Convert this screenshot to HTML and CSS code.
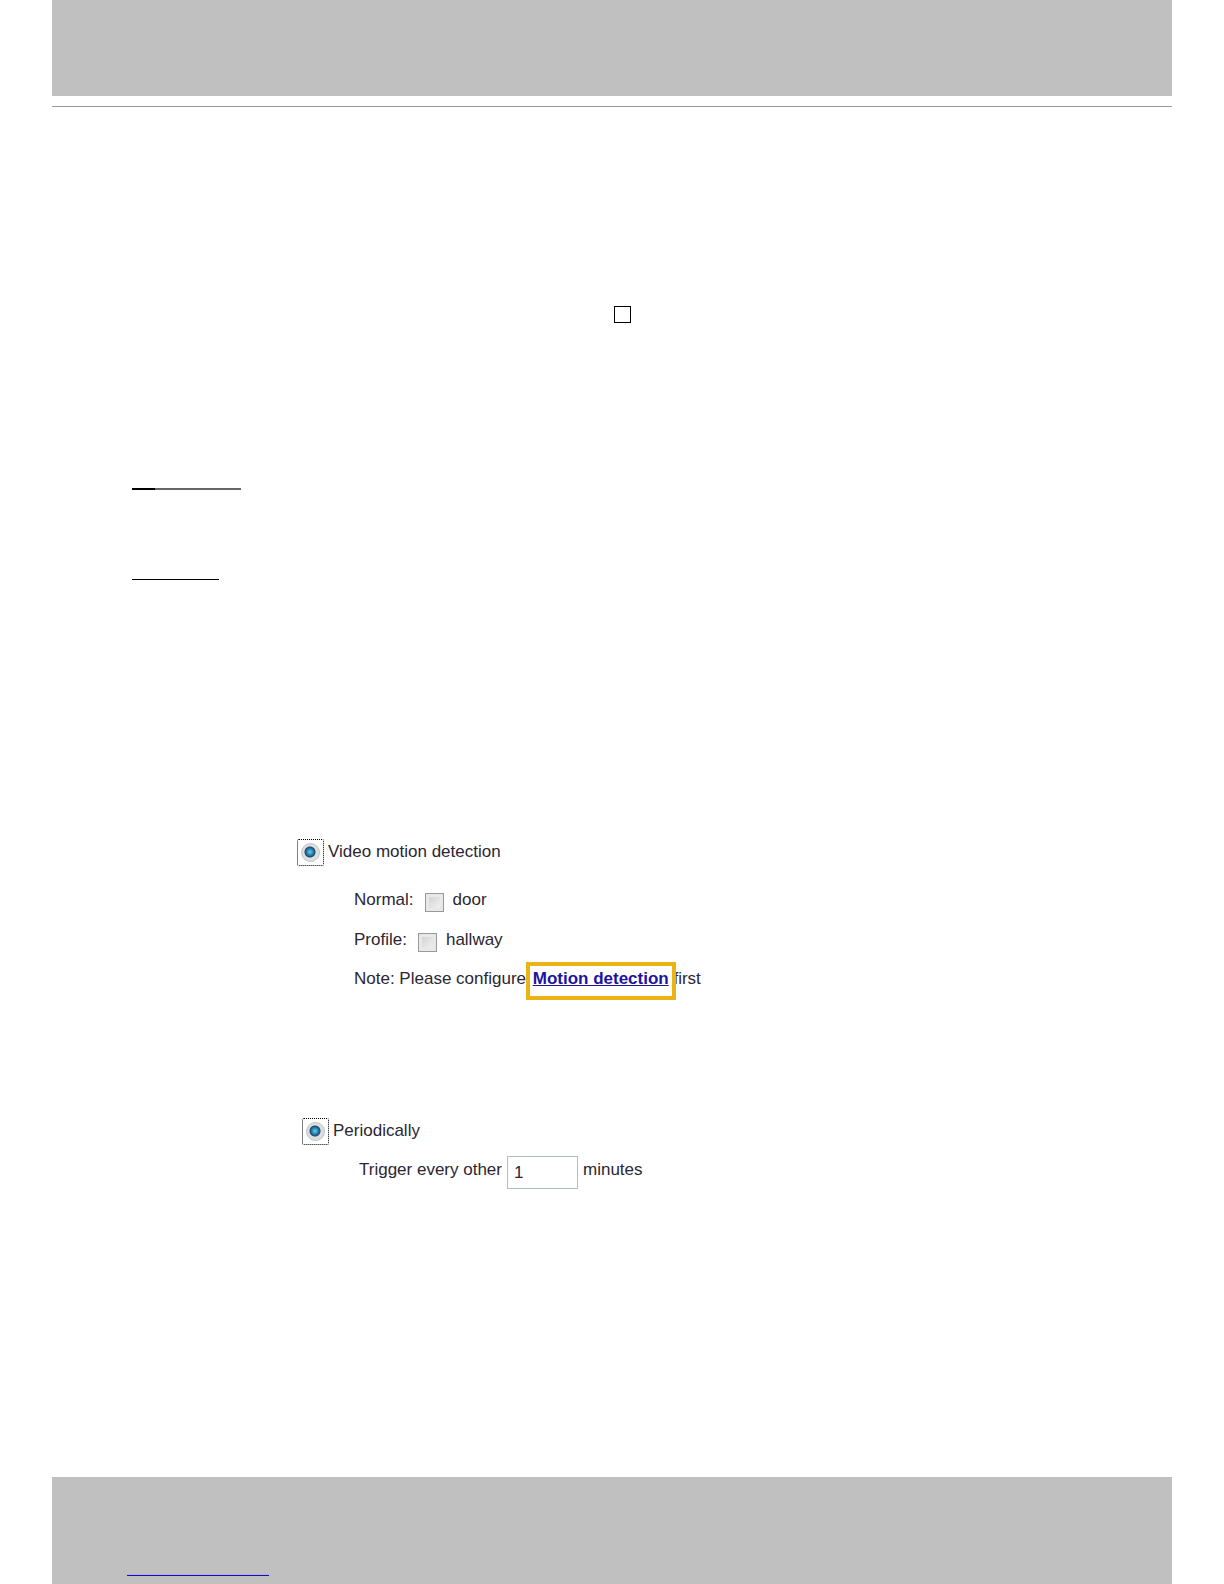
FILE: index.html
```
<!DOCTYPE html>
<html lang="en">
<head>
    <meta charset="UTF-8">
    <meta name="viewport" content="width=device-width, initial-scale=1.0">
    <title>Event trigger</title>
    <link rel="stylesheet" href="styles.css">
</head>
<body>

<header class="band"></header>
<hr class="rule">

<main>
    <div class="square"></div>
    <div class="underline"><span></span></div>
    <div class="underline short"></div>

    <form>
        <section class="trigger">
            <div class="head">
                <span class="focus"><input type="radio" id="motion" name="motion" checked></span>
                <label for="motion">Video motion detection</label>
            </div>
            <div class="row">
                <span>Normal:</span>
                <input type="checkbox" id="door">
                <label for="door">door</label>
            </div>
            <div class="row">
                <span>Profile:</span>
                <input type="checkbox" id="hallway">
                <label for="hallway">hallway</label>
            </div>
            <p class="row note">Note: Please configure <a href="#">Motion detection</a> first</p>
        </section>

        <section class="trigger periodic">
            <div class="head">
                <span class="focus"><input type="radio" id="period" name="period" checked></span>
                <label for="period">Periodically</label>
            </div>
            <div class="row">
                <label for="minutes">Trigger every other</label>
                <input type="text" id="minutes" value="1">
                <span>minutes</span>
            </div>
        </section>
    </form>
</main>

<footer class="band">
    <a href="#" class="footer-link" aria-label="Home"></a>
</footer>

</body>
</html>
```
FILE: styles.css
```
* {
    box-sizing: border-box;
}
body {
    display: flex;
    flex-direction: column;
    min-height: 100vh;
    margin: 0;
    padding: 0 52px;
    background-color: #fff;
    color: #2b2633;
    font-family: "Liberation Sans", Arial, sans-serif;
    font-size: 17px;
    line-height: 20px;
}
.band {
    height: 96px;
    background-color: #c0c0c0;
}
.rule {
    width: 100%;
    height: 1px;
    margin: 10px 0 0;
    border: none;
    background-color: #999;
}
main {
    flex: 1;
    padding: 199px 80px 0;
}
.square {
    width: 17px;
    height: 17px;
    margin-left: 482px;
    border: 1px solid #000;
}
.underline {
    width: 109px;
    height: 2px;
    margin-top: 165px;
    background-color: #666;
}
.underline span {
    display: block;
    width: 23px;
    height: 2px;
    background-color: #000;
}
.underline.short {
    width: 87px;
    height: 1px;
    margin-top: 89px;
    background-color: #000;
}
form {
    margin-top: 258px;
    padding-left: 165px;
}
.head {
    display: flex;
    align-items: center;
    gap: 4px;
    height: 28px;
    margin-bottom: 14px;
}
.focus {
    display: flex;
    align-items: center;
    justify-content: center;
    width: 27px;
    height: 27px;
    border: 1px dotted #000;
    border-radius: 2px;
}
input[type="radio"] {
    appearance: none;
    width: 19px;
    height: 19px;
    margin: 0;
    border: 1px solid #c4c4c4;
    border-radius: 50%;
    background: radial-gradient(circle at 8px 8px, #7cc8ea 0, #2586b8 3px, #1a4a6c 5px, transparent 6px), #dcdedf;
}
.row {
    display: flex;
    align-items: center;
    height: 40px;
    margin: 0;
    padding-left: 57px;
}
input[type="checkbox"] {
    appearance: none;
    width: 19px;
    height: 19px;
    margin: 4px 9px 0 11px;
    border: 1px solid #999;
    background: linear-gradient(135deg, #ccc, #f8f8f8);
    box-shadow: inset 0 0 0 3px #e8e8e8;
}
.note {
    display: block;
    padding-top: 9px;
}
.note a {
    position: relative;
    z-index: 1;
    margin-left: 2px;
    color: #1c14a0;
    font-weight: bold;
}
/* highlight frame around the link */
.note a::before {
    content: "";
    position: absolute;
    z-index: -1;
    top: -7px;
    right: -7px;
    bottom: -12px;
    left: -7px;
    border: 4px solid #ebb414;
    background-color: #fff;
}
.periodic {
    margin-top: 117px;
    padding-left: 5px;
}
.periodic .head {
    margin-bottom: 5px;
}
input[type="text"] {
    width: 71px;
    height: 33px;
    margin: 5px 5px 0;
    padding: 0 6px;
    border: 1px solid #b4bcc4;
    color: #2b2633;
    font: inherit;
}
footer.band {
    height: 107px;
    padding: 97px 0 0 75px;
}
.footer-link {
    display: block;
    width: 142px;
    height: 2px;
    border-top: 1px solid #b0b0e0;
    background-color: #1414b4;
}
```
